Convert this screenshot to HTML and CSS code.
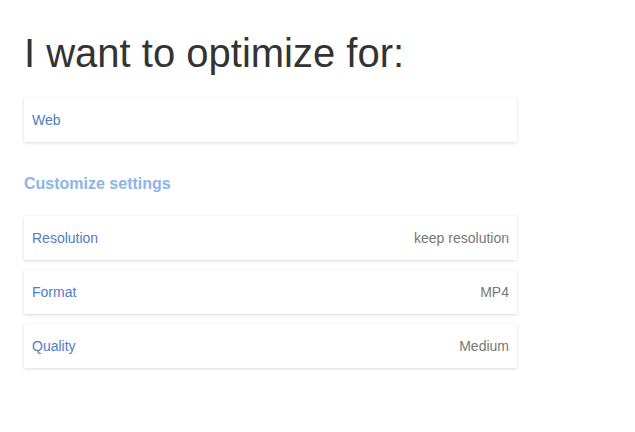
FILE: index.html
```html
<!DOCTYPE html>
<html>
<head>
<meta charset="utf-8">
<link rel="stylesheet" href="styles.css">
</head>
<body>
<main class="page">
  <h1 class="title">I want to optimize for:</h1>
  <div class="card target">
    <span class="label">Web</span>
  </div>
  <h2 class="section">Customize settings</h2>
  <div class="list">
    <div class="card">
      <span class="label">Resolution</span>
      <span class="value">keep resolution</span>
    </div>
    <div class="card">
      <span class="label">Format</span>
      <span class="value">MP4</span>
    </div>
    <div class="card">
      <span class="label">Quality</span>
      <span class="value">Medium</span>
    </div>
  </div>
</main>
</body>
</html>
```
FILE: styles.css
```css
html, body {
  margin: 0;
  padding: 0;
  background: #ffffff;
}
body {
  font-family: "Liberation Sans", Arial, sans-serif;
  min-height: 432px;
}
.page {
  padding: 30px 0 40px 24px;
  width: 493px;
}
.title {
  margin: 0;
  font-size: 40px;
  line-height: 46px;
  font-weight: normal;
  color: #333333;
}
.card {
  display: flex;
  justify-content: space-between;
  align-items: center;
  height: 44px;
  box-sizing: border-box;
  padding: 0 8px;
  background: #ffffff;
  box-shadow: 0 1px 3px rgba(0, 0, 0, 0.14), 0 0 1px rgba(0, 0, 0, 0.06);
  font-size: 14px;
  line-height: 16px;
}
.target {
  margin-top: 22px;
}
.label {
  color: #4f7cc4;
}
.value {
  color: #777777;
}
.section {
  margin: 33px 0 23px;
  font-size: 16px;
  line-height: 18px;
  font-weight: bold;
  color: #8db4e6;
}
.list {
  display: flex;
  flex-direction: column;
  gap: 10px;
}
```
